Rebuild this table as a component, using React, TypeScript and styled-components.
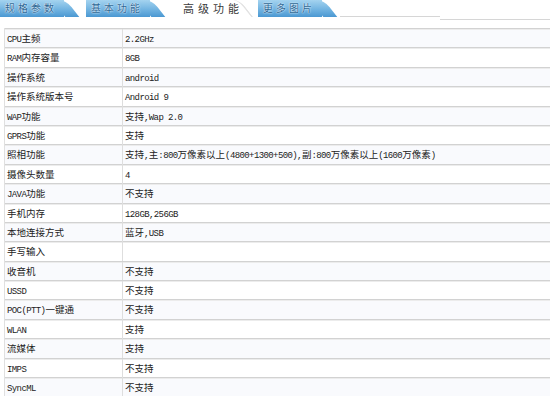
import { styled, createGlobalStyle } from 'styled-components';

const GlobalStyle = createGlobalStyle`
  html, body {
    margin: 0;
    padding: 0;
    background: #ffffff;
    overflow: hidden;
  }
  body {
    font-family: 'Noto Sans CJK SC', 'Liberation Sans', sans-serif;
    color: #222;
  }
`;

const specs = [
  { name: 'CPU主频', value: '2.2GHz' },
  { name: 'RAM内存容量', value: '8GB' },
  { name: '操作系统', value: 'android' },
  { name: '操作系统版本号', value: 'Android 9' },
  { name: 'WAP功能', value: '支持,Wap 2.0' },
  { name: 'GPRS功能', value: '支持' },
  {
    name: '照相功能',
    value: '支持,主:800万像素以上(4800+1300+500),副:800万像素以上(1600万像素)',
  },
  { name: '摄像头数量', value: '4' },
  { name: 'JAVA功能', value: '不支持' },
  { name: '手机内存', value: '128GB,256GB' },
  { name: '本地连接方式', value: '蓝牙,USB' },
  { name: '手写输入', value: '' },
  { name: '收音机', value: '不支持' },
  { name: 'USSD', value: '不支持' },
  { name: 'POC(PTT)一键通', value: '不支持' },
  { name: 'WLAN', value: '支持' },
  { name: '流媒体', value: '支持' },
  { name: 'IMPS', value: '不支持' },
  { name: 'SyncML', value: '不支持' },
];

const tabs = ['规格参数', '基本功能', '高级功能', '更多图片'];

const tabBlue = 'linear-gradient(#a4d3ef, #72b4e1 55%, #4b98d2)';

const Page = styled.div`
  width: 550px;
  height: 396px;
  overflow: hidden;
`;

const TabBar = styled.div`
  display: flex;
  align-items: flex-start;
  height: 28px;
`;

const Tab = styled.div<{ $active?: boolean }>`
  position: relative;
  flex: none;
  width: 64px;
  height: 17px;
  margin-right: 22px;
  padding-left: ${({ $active }) => ($active ? '11px' : '5px')};
  box-sizing: border-box;
  font-size: ${({ $active }) => ($active ? '11px' : '10px')};
  line-height: 16px;
  letter-spacing: ${({ $active }) => ($active ? '4px' : '3px')};
  white-space: nowrap;
  color: ${({ $active }) => ($active ? '#3a3a3a' : '#2c6694')};
  text-shadow: ${({ $active }) =>
    $active ? 'none' : '0 0 2px #e8f4fc, 0 0 1px #ffffff'};
  background: ${({ $active }) => ($active ? '#ffffff' : tabBlue)};
  z-index: 1;

  &::after {
    content: '';
    position: absolute;
    top: 0;
    left: 100%;
    margin-left: -12px;
    width: 14px;
    height: 17px;
    transform: skewX(38deg);
    transform-origin: top left;
    border-top-right-radius: 7px;
    background: ${({ $active }) => ($active ? 'transparent' : tabBlue)};
    border-right: ${({ $active }) => ($active ? '2px solid #e2e2e2' : 'none')};
    z-index: -1;
  }
`;

const TabLine = styled.div<{ $drop: number; $width: number }>`
  flex: none;
  width: ${({ $width }) => $width}px;
  margin-top: ${({ $drop }) => $drop}px;
  border-top: 1px solid #d6d6d6;
`;

const TabRest = styled.div`
  display: flex;
  margin-left: -4px;
`;

const Table = styled.div`
  margin-left: 4px;
  border-left: 1px solid #e0e0e0;
`;

const Row = styled.div`
  display: grid;
  grid-template-columns: 117px 1fr;
  height: 19.4px;
  box-sizing: border-box;
  border-top: 1px solid #d2d2d2;
  box-shadow: inset 0 1px 0 #ececec;
  font-size: 9.5px;
  line-height: 18px;

  &:nth-child(odd) {
    background: #f9fafd;
  }
`;

const Cell = styled.div<{ $value?: boolean }>`
  padding-left: 2px;
  border-left: ${({ $value }) => ($value ? '1px solid #dedede' : 'none')};
  white-space: nowrap;
  color: #222;
`;

const Latin = styled.span`
  font-family: 'Liberation Mono', 'DejaVu Sans Mono', monospace;
  font-size: 9px;
  letter-spacing: -0.6px;
`;

// SimSun-like look: latin runs are half-width mono, CJK stays full size
const Mixed = ({ text }: { text: string }) => (
  <>
    {text.split(/([\x20-\x7e]+)/).map((part, i) =>
      /^[\x20-\x7e]+$/.test(part) ? <Latin key={i}>{part}</Latin> : part
    )}
  </>
);

const App = () => {
  return (
    <Page>
      <GlobalStyle />
      <TabBar>
        {tabs.map((t) => (
          <Tab key={t} $active={t === '高级功能'}>
            {t}
          </Tab>
        ))}
        <TabRest>
          <TabLine $drop={16} $width={100} />
          <TabLine $drop={19} $width={200} />
        </TabRest>
      </TabBar>

      <Table>
        {specs.map((item) => (
          <Row key={item.name}>
            <Cell>
              <Mixed text={item.name} />
            </Cell>
            <Cell $value>
              <Mixed text={item.value} />
            </Cell>
          </Row>
        ))}
      </Table>
    </Page>
  );
};

export default App;
